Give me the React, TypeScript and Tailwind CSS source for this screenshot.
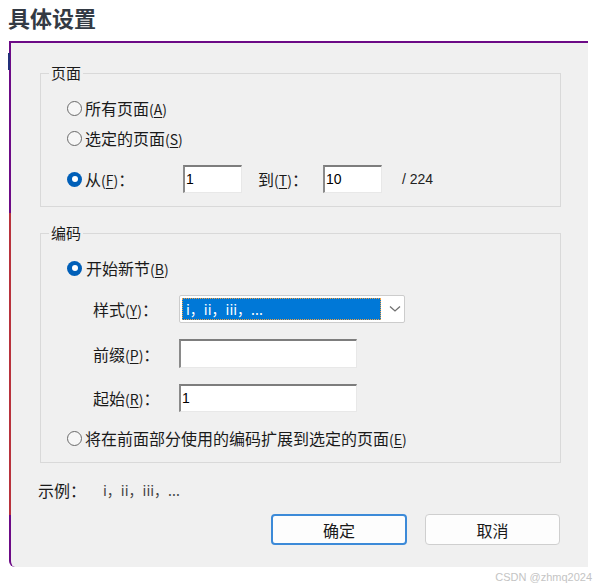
import type { ReactNode } from 'react';

const CJK = "font-['Microsoft_YaHei','Noto_Sans_CJK_SC',sans-serif]";
const LATIN = "font-['Liberation_Sans','Noto_Sans_CJK_SC',sans-serif]";

function Radio({ checked = false }: { checked?: boolean }) {
  if (checked) {
    return (
      <span className="flex h-[15px] w-[15px] shrink-0 items-center justify-center rounded-full bg-[#005fb8]">
        <span className="h-[6px] w-[6px] rounded-full bg-white" />
      </span>
    );
  }
  return <span className="h-[15px] w-[15px] shrink-0 rounded-full border border-[#6a6a6a] bg-[#f7f7f7]" />;
}

function Key({ k }: { k: string }) {
  return (
    <span className="text-[14px]">
      (<span className="underline underline-offset-2">{k}</span>)
    </span>
  );
}

function SunkenInput({ value, width }: { value?: string; width: string }) {
  return (
    <div
      className={`${width} flex h-full items-center border-t-2 border-l-2 border-r border-b border-t-[#7d7d7d] border-l-[#8a8a8a] border-r-[#e8e8e8] border-b-[#e8e8e8] bg-white pl-[1px] ${LATIN} text-[14px] text-black`}
    >
      {value}
    </div>
  );
}

function Group({ title, children }: { title: string; children: ReactNode }) {
  return (
    <fieldset className="ml-[29px] w-[521px] border border-[#d9d9d9] pl-[26px]">
      <legend className="ml-[-18px] px-[2px] text-[15px] leading-[20px] text-[#1a1a1a]">{title}</legend>
      {children}
    </fieldset>
  );
}

export default function App() {
  return (
    <div className={`h-[587px] w-[602px] bg-white ${CJK} relative`}>
      {/* title */}
      <div className="pl-[8px] pt-[2px] text-[22px] font-bold leading-[30px] text-[#333a44]">具体设置</div>

      {/* dialog */}
      <div className="relative ml-[9px] mt-[9px] flex h-[526px] w-[579px] flex-col rounded-bl-[6px] border-l-2 border-t-2 border-[#6c0a86] bg-[#f0f0f0] text-[#1a1a1a]">
        {/* edge artefacts of the capture */}
        <div className="absolute left-[-3px] top-[10px] h-[17px] w-[2px] bg-[#23307a]" />
        <div className="absolute left-[-2px] top-[170px] h-[302px] w-[2px] bg-[#b8323c]" />

        <div className="mt-[20px]">
          <Group title="页面">
            <div className="mt-[15px] flex h-[20px] items-center gap-[3px] text-[16px]">
              <Radio />
              <span>
                所有页面<Key k="A" />
              </span>
            </div>
            <div className="mt-[10px] flex h-[20px] items-center gap-[3px] text-[16px]">
              <Radio />
              <span>
                选定的页面<Key k="S" />
              </span>
            </div>
            <div className="mt-[17px] mb-[13px] flex h-[28px] items-center text-[16px]">
              <Radio checked />
              <span className="ml-[3px] w-[98px]">
                从<Key k="F" />：
              </span>
              <SunkenInput value="1" width="w-[59px]" />
              <span className="ml-[16px] w-[65px]">
                到<Key k="T" />：
              </span>
              <SunkenInput value="10" width="w-[59px]" />
              <span className={`ml-[20px] ${LATIN} text-[14px] text-[#222]`}>/ 224</span>
            </div>
          </Group>
        </div>

        <div className="mt-[16px]">
          <Group title="编码">
            <div className="mt-[15px] flex h-[20px] items-center gap-[4px] text-[16px]">
              <Radio checked />
              <span>
                开始新节<Key k="B" />
              </span>
            </div>

            <div className="mt-[17px] flex h-[28px] items-center text-[16px]">
              <span className="ml-[26px] w-[86px]">
                样式<Key k="Y" />：
              </span>
              <div className="flex h-full w-[226px] items-center rounded-[2px] border border-[#cccccc] bg-white pl-[2px]">
                <div className="flex h-[22px] w-[199px] items-center border border-dotted border-[#f0a040] bg-[#0078d7] pl-[3px] text-[14px] text-white">
                  i，ii，iii，...
                </div>
                <svg className="ml-[8px]" width="12" height="8" viewBox="0 0 12 8">
                  <polyline points="1,1.5 6,6 11,1.5" fill="none" stroke="#707070" strokeWidth="1.3" />
                </svg>
              </div>
            </div>

            <div className="mt-[16px] flex h-[29px] items-center text-[16px]">
              <span className="ml-[26px] w-[86px]">
                前缀<Key k="P" />：
              </span>
              <SunkenInput width="w-[178px]" />
            </div>

            <div className="mt-[16px] flex h-[28px] items-center text-[16px]">
              <span className="ml-[26px] w-[86px]">
                起始<Key k="R" />：
              </span>
              <SunkenInput value="1" width="w-[178px]" />
            </div>

            <div className="mt-[16px] mb-[14px] flex h-[20px] items-center gap-[3px] text-[16px]">
              <Radio />
              <span>
                将在前面部分使用的编码扩展到选定的页面<Key k="E" />
              </span>
            </div>
          </Group>
        </div>

        <div className="ml-[27px] mt-[17px] flex h-[20px] items-center text-[16px]">
          <span className="w-[65px]">示例：</span>
          <span className="text-[14px] text-[#444]">i，ii，iii，...</span>
        </div>

        <div className="mt-[14px] flex justify-end gap-[18px] pr-[28px]">
          <button className="h-[31px] w-[136px] rounded-[4px] border-2 border-[#3c8ad8] bg-[#fdfdfd] text-[16px]">
            确定
          </button>
          <button className="h-[31px] w-[135px] rounded-[4px] border border-[#cfcfcf] bg-[#fdfdfd] text-[16px]">
            取消
          </button>
        </div>
      </div>

      <div className={`absolute right-[10px] top-[570px] ${LATIN} text-[11px] leading-[14px] text-[#c4c4c4]`}>
        CSDN @zhmq2024
      </div>
    </div>
  );
}
